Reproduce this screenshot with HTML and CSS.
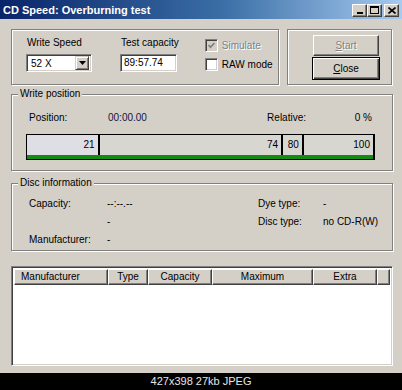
FILE: index.html
```html
<!DOCTYPE html>
<html lang="en">
<head>
    <meta charset="UTF-8">
    <title>CD Speed: Overburning test</title>
    <link rel="stylesheet" href="styles.css">
</head>
<body>
    <div class="window">
        <div class="titlebar">
            <span class="title">CD Speed: Overburning test</span>
            <div class="caption-buttons">
                <span class="cap-btn">
                    <svg width="8" height="8" viewBox="0 0 8 8"><rect x="1" y="6" width="6" height="2" fill="#000"/></svg>
                </span>
                <span class="cap-btn">
                    <svg width="9" height="8" viewBox="0 0 9 8"><rect x="0.5" y="0.5" width="8" height="7" fill="none" stroke="#000"/><rect x="0" y="0" width="9" height="2" fill="#000"/></svg>
                </span>
                <span class="cap-btn close">
                    <svg width="8" height="7" viewBox="0 0 8 7"><path d="M0.5 0.5 L7.5 6.5 M7.5 0.5 L0.5 6.5" stroke="#000" stroke-width="1.6"/></svg>
                </span>
            </div>
        </div>

        <div class="client">
            <!-- settings + start/close -->
            <div class="top-row">
                <div class="group settings">
                    <div class="field">
                        <div class="field-label">Write Speed</div>
                        <div class="sunken combo">
                            <span class="combo-text">52 X</span>
                            <span class="combo-arrow">
                                <svg width="7" height="4" viewBox="0 0 7 4"><polygon points="0,0 7,0 3.5,4" fill="#000"/></svg>
                            </span>
                        </div>
                    </div>
                    <div class="field capacity">
                        <div class="field-label">Test capacity</div>
                        <div class="sunken edit">89:57.74</div>
                    </div>
                    <div class="checks">
                        <label class="check disabled">
                            <span class="sunken box gray">
                                <svg width="9" height="9" viewBox="0 0 9 9"><polyline points="1.5,4 3.5,6.2 7.5,2" fill="none" stroke="#808080" stroke-width="1.7"/></svg>
                            </span>
                            Simulate
                        </label>
                        <label class="check">
                            <span class="sunken box"></span>
                            RAW mode
                        </label>
                    </div>
                </div>
                <div class="group actions">
                    <button class="btn" disabled><u>S</u>tart</button>
                    <button class="btn default"><u>C</u>lose</button>
                </div>
            </div>

            <div class="group write-position">
                <div class="group-title">Write position</div>
                <div class="pos-row">
                    <span class="pos-label">Position:</span>
                    <span class="pos-value">00:00.00</span>
                    <span class="rel-label">Relative:</span>
                    <span class="rel-value">0 %</span>
                </div>
                <div class="bar">
                    <div class="bar-segments">
                        <div class="seg first" style="width: 21%">21</div>
                        <div class="seg" style="width: 53%">74</div>
                        <div class="seg" style="width: 6%">80</div>
                        <div class="seg last" style="width: 20%">100</div>
                    </div>
                    <div class="bar-progress"></div>
                </div>
            </div>

            <div class="group disc-info">
                <div class="group-title">Disc information</div>
                <div class="info-grid">
                    <span>Capacity:</span>
                    <span>--:--.--</span>
                    <span>Dye type:</span>
                    <span>-</span>

                    <span></span>
                    <span>-</span>
                    <span>Disc type:</span>
                    <span>no CD-R(W)</span>

                    <span>Manufacturer:</span>
                    <span>-</span>
                    <span></span>
                    <span></span>
                </div>
            </div>

            <div class="sunken listview">
                <div class="list-header">
                    <div class="col left" style="width: 94px">Manufacturer</div>
                    <div class="col" style="width: 40px">Type</div>
                    <div class="col" style="width: 64px">Capacity</div>
                    <div class="col" style="width: 101px">Maximum</div>
                    <div class="col" style="width: 64px">Extra</div>
                    <div class="col filler"></div>
                </div>
            </div>
        </div>
    </div>

    <div class="caption">427x398 27kb JPEG</div>
</body>
</html>
```

FILE: styles.css
```css
* {
    box-sizing: border-box;
}
body {
    margin: 0;
    width: 402px;
    height: 390px;
    overflow: hidden;
    background: #000;
    font-family: "Liberation Sans", Arial, sans-serif;
    font-size: 10px;
    color: #000;
}
.window {
    height: 373px;
    background: #d4d0c8;
    display: flex;
    flex-direction: column;
}

/* title bar */
.titlebar {
    height: 19px;
    background: linear-gradient(to right, #0a246a, #3a6ea5 55%, #a6caf0);
    display: flex;
    align-items: center;
    padding: 0 3px;
}
.title {
    flex: 1;
    color: #fff;
    font-weight: bold;
    font-size: 11px;
}
.caption-buttons {
    display: flex;
    margin-top: 1px;
}
.cap-btn {
    width: 15px;
    height: 13px;
    background: #d4d0c8;
    border: 1px solid;
    border-color: #fff #404040 #404040 #fff;
    box-shadow: inset -1px -1px #808080;
    display: flex;
    align-items: center;
    justify-content: center;
}
.cap-btn.close {
    margin-left: 2px;
}

/* client area */
.client {
    flex: 1;
    padding: 10px 9px 0 11px;
    display: flex;
    flex-direction: column;
}
.group {
    border: 1px solid #808080;
    box-shadow: inset 1px 1px #fff, 1px 1px #fff;
}
.group-title {
    width: fit-content;
    margin: -7px 0 0 6px;
    padding: 0 2px;
    background: #d4d0c8;
    line-height: 12px;
}
.sunken {
    border: 1px solid;
    border-color: #808080 #fff #fff #808080;
    box-shadow: inset 1px 1px #404040, inset -1px -1px #d4d0c8;
    background: #fff;
}

.top-row {
    display: flex;
    gap: 8px;
    height: 56px;
}
.settings {
    width: 268px;
    display: flex;
    align-items: flex-start;
    padding: 7px 0 0 14px;
}
.field-label {
    line-height: 12px;
    padding-left: 1px;
    margin-bottom: 5px;
}
.combo {
    width: 66px;
    height: 18px;
    display: flex;
    align-items: center;
    padding: 2px 2px 2px 4px;
}
.combo-text {
    flex: 1;
}
.combo-arrow {
    width: 14px;
    height: 14px;
    background: #d4d0c8;
    border: 1px solid;
    border-color: #d4d0c8 #404040 #404040 #d4d0c8;
    box-shadow: inset 1px 1px #fff, inset -1px -1px #808080;
    display: flex;
    align-items: center;
    justify-content: center;
}
.capacity {
    margin-left: 28px;
}
.edit {
    width: 57px;
    height: 18px;
    line-height: 16px;
    padding-left: 3px;
}
.checks {
    margin: 2px 0 0 26px;
    display: flex;
    flex-direction: column;
    gap: 6px;
}
.check {
    display: flex;
    align-items: center;
    gap: 4px;
    height: 13px;
}
.check.disabled {
    color: #808080;
    text-shadow: 1px 1px #fff;
}
.box {
    width: 13px;
    height: 13px;
    display: flex;
    align-items: center;
    justify-content: center;
}
.box.gray {
    background: #d4d0c8;
}

.actions {
    width: 105px;
    display: flex;
    flex-direction: column;
    align-items: flex-start;
    padding: 5px 0 0 25px;
    gap: 1px;
}
.btn {
    width: 66px;
    height: 21px;
    padding: 0;
    font-family: inherit;
    font-size: 10px;
    color: #000;
    background: #d4d0c8;
    border: 1px solid;
    border-color: #fff #404040 #404040 #fff;
    box-shadow: inset -1px -1px #808080;
}
.btn:disabled {
    color: #808080;
    text-shadow: 1px 1px #fff;
}
.btn.default {
    width: 68px;
    height: 23px;
    margin-left: -1px;
    outline: none;
    border: 1px solid #000;
    box-shadow: inset 1px 1px #fff, inset -1px -1px #404040, inset -2px -2px #808080;
}

/* write position */
.write-position {
    margin-top: 9px;
    height: 77px;
}
.pos-row {
    display: flex;
    margin: 12px 20px 0 17px;
    line-height: 12px;
}
.pos-label {
    width: 79px;
}
.pos-value {
    flex: 1;
    color: #14143c;
}
.rel-value {
    width: 66px;
    text-align: right;
}
.bar {
    margin: 10px 17px 0 14px;
    border: 1px solid #000;
    border-right-width: 2px;
    background: #d8d6d0;
}
.bar-segments {
    display: flex;
    height: 20px;
}
.seg {
    line-height: 20px;
    text-align: right;
    padding-right: 3px;
    border-right: 2px solid #000;
}
.seg.first {
    background: #dedee4;
}
.seg.last {
    border-right: none;
}
.bar-progress {
    height: 4px;
    background: #138a13;
}

/* disc information */
.disc-info {
    margin-top: 12px;
    height: 68px;
}
.info-grid {
    display: grid;
    grid-template-columns: 78px 151px 65px auto;
    row-gap: 6px;
    margin: 9px 0 0 17px;
    line-height: 12px;
}

/* list */
.listview {
    margin-top: 15px;
    height: 100px;
    padding: 2px;
}
.list-header {
    display: flex;
    height: 16px;
}
.col {
    background: #d4d0c8;
    border: 1px solid;
    border-color: #fff #404040 #404040 #fff;
    box-shadow: inset -1px -1px #808080;
    line-height: 14px;
    text-align: center;
}
.col.left {
    text-align: left;
    padding-left: 6px;
}
.col.filler {
    flex: 1;
}

.caption {
    height: 17px;
    line-height: 17px;
    text-align: center;
    color: #e6e6e6;
    font-size: 11px;
}
```
